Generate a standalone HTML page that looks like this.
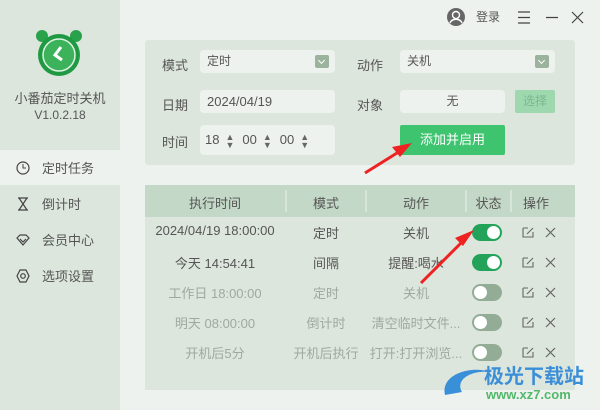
<!DOCTYPE html><html><head><meta charset="utf-8"><style>
*{margin:0;padding:0;box-sizing:border-box}
body{width:600px;height:410px;overflow:hidden;background:#edf2ee;font-family:"Liberation Sans","Noto Sans CJK SC",sans-serif;color:#555;position:relative;font-size:13px}
.a{position:absolute}
.side{left:0;top:0;width:120px;height:410px;background:#dce6dc}
.nav{left:0;width:120px;height:35px;display:flex;align-items:center;padding-left:16px;font-size:13px;color:#555}
.nav svg{margin-right:12px}
.inp{background:#edf2ee;border-radius:4px;height:23px;line-height:23px;padding-left:7px;font-size:12px}
.lbl{font-size:13px;color:#555}
.dd{position:absolute;right:6px;top:5px;width:14px;height:13px;background:#9bb39d;border-radius:2px}
.dd:after{content:"";position:absolute;left:4px;top:3px;width:4px;height:4px;border-right:1.3px solid #fff;border-bottom:1.3px solid #fff;transform:rotate(45deg)}
.row{position:absolute;left:145px;width:430px;height:30px;font-size:13px;white-space:nowrap}
.row span{position:absolute;top:6px;text-align:center}
.tg{position:absolute;left:327px;top:7px;width:30px;height:17px;border-radius:9px}
.tg i{position:absolute;top:2px;width:13px;height:13px;border-radius:50%;background:#fff}
.op{position:absolute;left:377px;top:9px}
.sp{display:inline-block;font-size:9px;line-height:8px;vertical-align:middle;color:#666;margin:0 8px 0 6px;text-align:center}
</style></head><body>
<div class="a side"></div>
<svg class="a" style="left:33px;top:28px" width="52" height="50" viewBox="0 0 52 50"><circle cx="9" cy="8" r="6" fill="#2aa24c"/><circle cx="43" cy="8" r="6" fill="#2aa24c"/><circle cx="26" cy="27" r="21" fill="#1f9a42"/><circle cx="26" cy="27" r="16" fill="#3cb35a" stroke="#dff2e3" stroke-width="1.5"/><path d="M28 19 L22 27 L29 32" stroke="#fff" stroke-width="3" fill="none"/></svg>
<div class="a" style="left:0;width:120px;top:88px;text-align:center;font-size:13px">小番茄定时关机</div>
<div class="a" style="left:0;width:120px;top:108px;text-align:center;font-size:12px">V1.0.2.18</div>
<div class="a nav" style="top:150px;background:#edf2ee"><svg width="14" height="14"><circle cx="7" cy="7" r="6" stroke="#444" fill="none" stroke-width="1.2"/><path d="M7 3V7H10" stroke="#444" fill="none"/></svg>定时任务</div>
<div class="a nav" style="top:186px"><svg width="14" height="14"><path d="M2 1H12M2 13H12M3 1L11 13M11 1L3 13" stroke="#444" fill="none" stroke-width="1.2"/></svg>倒计时</div>
<div class="a nav" style="top:222px"><svg width="14" height="14"><path d="M1 5L4 2H10L13 5L7 12Z M4 6L7 9L10 6" stroke="#444" fill="none" stroke-width="1.2"/></svg>会员中心</div>
<div class="a nav" style="top:258px"><svg width="14" height="14"><path d="M4 1H10L13 7L10 13H4L1 7Z" stroke="#444" fill="none" stroke-width="1.2"/><circle cx="7" cy="7" r="2.3" stroke="#444" fill="none" stroke-width="1.2"/></svg>选项设置</div>
<svg class="a" style="left:446px;top:7px" width="20" height="20"><circle cx="10" cy="10" r="9" fill="#666"/><circle cx="10" cy="8" r="3.5" stroke="#fff" fill="none" stroke-width="1.4"/><path d="M4 16C6 11 14 11 16 16" stroke="#fff" fill="none" stroke-width="1.4"/></svg>
<div class="a" style="left:476px;top:8px;font-size:12px">登录</div>
<svg class="a" style="left:516px;top:11px" width="70" height="14"><path d="M2 1H14M2 6.5H14M2 12H14M30 6.5H42M56 1L67 12M67 1L56 12" stroke="#444" stroke-width="1.2"/></svg>
<div class="a" style="left:145px;top:40px;width:430px;height:125px;background:#dde6dc;border-radius:3px"></div>
<div class="a lbl" style="left:162px;top:55px">模式</div>
<div class="a inp" style="left:200px;top:50px;width:135px">定时<div class="dd"></div></div>
<div class="a lbl" style="left:357px;top:55px">动作</div>
<div class="a inp" style="left:400px;top:50px;width:155px">关机<div class="dd"></div></div>
<div class="a lbl" style="left:162px;top:95px">日期</div>
<div class="a inp" style="left:200px;top:90px;width:135px;font-size:13px">2024/04/19</div>
<div class="a lbl" style="left:357px;top:95px">对象</div>
<div class="a inp" style="left:400px;top:90px;width:105px;text-align:center;padding:0">无</div>
<div class="a" style="left:515px;top:90px;width:40px;height:23px;background:#9ed8ae;color:#7bb98d;text-align:center;line-height:23px;font-size:12px;border-radius:2px">选择</div>
<div class="a lbl" style="left:162px;top:132px">时间</div>
<div class="a inp" style="left:200px;top:125px;width:135px;height:30px;line-height:30px;font-size:13px;padding-left:5px">18<span class="sp">▲<br>▼</span>00<span class="sp">▲<br>▼</span>00<span class="sp">▲<br>▼</span></div>
<div class="a" style="left:400px;top:125px;width:105px;height:30px;background:#3ec46f;color:#fff;text-align:center;line-height:30px;font-size:13px;border-radius:2px">添加并启用</div>
<div class="a" style="left:145px;top:185px;width:430px;height:205px;background:#dde6dc"></div>
<div class="a" style="left:145px;top:185px;width:430px;height:32px;background:#c3d8c6"></div>
<div class="row" style="top:187px;color:#555"><span style="left:0;width:140px">执行时间</span><span style="left:141px;width:80px">模式</span><span style="left:221px;width:100px">动作</span><span style="left:321px;width:45px">状态</span><span style="left:366px;width:50px">操作</span></div>
<svg class="a" style="left:145px;top:185px" width="430" height="32"><path d="M141 5V27M221 5V27M321 5V27M366 5V27" stroke="#eef3ee"/></svg>
<div class="row" style="top:217px;color:#555"><span style="left:0;width:140px">2024/04/19 18:00:00</span><span style="left:141px;width:80px">定时</span><span style="left:221px;width:100px">关机</span><div class="tg" style="background:#23a35a"><i style="left:15px"></i></div><svg class="op" width="40" height="12"><path d="M1 2V11H11V6M1 2H6M5 8L11 2" stroke="#666" fill="none" stroke-width="1.1"/><path d="M24 2L33 11M33 2L24 11" stroke="#666" stroke-width="1.2"/></svg></div>
<div class="row" style="top:247px;color:#555"><span style="left:0;width:140px">今天 14:54:41</span><span style="left:141px;width:80px">间隔</span><span style="left:221px;width:100px">提醒:喝水</span><div class="tg" style="background:#23a35a"><i style="left:15px"></i></div><svg class="op" width="40" height="12"><path d="M1 2V11H11V6M1 2H6M5 8L11 2" stroke="#666" fill="none" stroke-width="1.1"/><path d="M24 2L33 11M33 2L24 11" stroke="#666" stroke-width="1.2"/></svg></div>
<div class="row" style="top:277px;color:#a0a8a0"><span style="left:0;width:140px">工作日 18:00:00</span><span style="left:141px;width:80px">定时</span><span style="left:221px;width:100px">关机</span><div class="tg" style="background:#93ac96"><i style="left:2px"></i></div><svg class="op" width="40" height="12"><path d="M1 2V11H11V6M1 2H6M5 8L11 2" stroke="#666" fill="none" stroke-width="1.1"/><path d="M24 2L33 11M33 2L24 11" stroke="#666" stroke-width="1.2"/></svg></div>
<div class="row" style="top:307px;color:#a0a8a0"><span style="left:0;width:140px">明天 08:00:00</span><span style="left:141px;width:80px">倒计时</span><span style="left:221px;width:100px">清空临时文件...</span><div class="tg" style="background:#93ac96"><i style="left:2px"></i></div><svg class="op" width="40" height="12"><path d="M1 2V11H11V6M1 2H6M5 8L11 2" stroke="#666" fill="none" stroke-width="1.1"/><path d="M24 2L33 11M33 2L24 11" stroke="#666" stroke-width="1.2"/></svg></div>
<div class="row" style="top:337px;color:#a0a8a0"><span style="left:0;width:140px">开机后5分</span><span style="left:141px;width:80px">开机后执行</span><span style="left:221px;width:100px">打开:打开浏览...</span><div class="tg" style="background:#93ac96"><i style="left:2px"></i></div><svg class="op" width="40" height="12"><path d="M1 2V11H11V6M1 2H6M5 8L11 2" stroke="#666" fill="none" stroke-width="1.1"/><path d="M24 2L33 11M33 2L24 11" stroke="#666" stroke-width="1.2"/></svg></div>
<svg class="a" style="left:0;top:0" width="600" height="410"><path d="M365 173L405 148" stroke="#e22" stroke-width="3"/><path d="M412 143L392 147L400 157Z" fill="#e22"/><path d="M421 283L466 238" stroke="#e22" stroke-width="3"/><path d="M474 230L455 238L463 246Z" fill="#e22"/>
<path d="M445 395C440 375 470 365 490 372C470 370 455 380 462 392" fill="#3a8fd9"/></svg>
<div class="a" style="left:484px;top:360px;font-size:20px;font-weight:bold;color:#3b8ed8">极光下载站</div>
<div class="a" style="left:486px;top:387px;font-size:13px;font-weight:bold;color:#52b86a">www.xz7.com</div>
</body></html>
